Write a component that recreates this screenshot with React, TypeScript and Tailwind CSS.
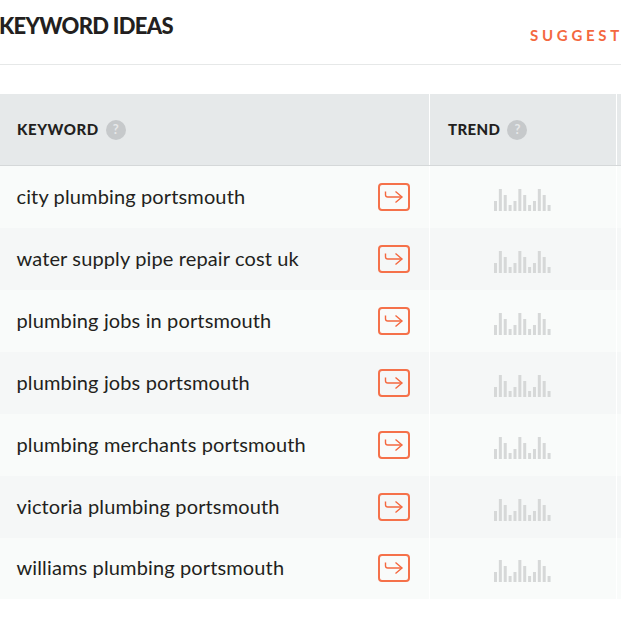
import React from "react";

const keywords = [
  "city plumbing portsmouth",
  "water supply pipe repair cost uk",
  "plumbing jobs in portsmouth",
  "plumbing jobs portsmouth",
  "plumbing merchants portsmouth",
  "victoria plumbing portsmouth",
  "williams plumbing portsmouth",
];

const bars = [10, 22, 16, 6, 10, 22, 16, 6, 10, 22, 16, 6];

const HelpBadge = () => (
  <span className="flex h-5 w-5 items-center justify-center rounded-full bg-[#c6c9cb] text-[13px] font-bold tracking-normal text-[#e6e8e9]">
    ?
  </span>
);

const ArrowButton = () => (
  <button className="flex h-7 w-8 items-center justify-center rounded-[4px] border-2 border-[#f5714a]">
    <svg width="20" height="14" viewBox="0 0 20 14" fill="none" stroke="#f4683f" strokeWidth="1.4">
      <path d="M1.500 1.500v3.200q0 2.300 2.300 2.300H18" />
      <path d="M11.500 1.500L18 7l-6.500 5.500" />
    </svg>
  </button>
);

const Trend = () => (
  <svg width="58" height="22" viewBox="0 0 58 22" fill="#d6d8d8">
    {bars.map((h, i) => (
      <rect key={i} x={i * 4.87} y={22 - h} width="3" height={h} />
    ))}
  </svg>
);

export default function App() {
  return (
    <div className="h-[617px] w-[621px] overflow-hidden bg-white font-['Lato',sans-serif] text-[#231f20]">
      <div className="flex h-[65px] w-[621px] items-start justify-between border-b border-[#e6e8e8]">
        <h2 className="-ml-px mt-[11px] text-[22px] leading-[30px] font-black tracking-[-0.7px] whitespace-nowrap">KEYWORD IDEAS</h2>
        <span className="mt-[25px] -mr-[2px] text-[15px] leading-5 font-bold tracking-[3.7px] whitespace-nowrap text-[#f4683f]">
          SUGGEST
        </span>
      </div>

      <div className="mt-[29px] w-[640px]">
        <div className="flex h-[72px] border-b border-[#d5d8d9] bg-[#e6e9ea]">
          <div className="flex w-[430px] items-center gap-[7px] border-r border-white pl-[17px] text-[15px] font-black tracking-[0.55px]">
            KEYWORD
            <HelpBadge />
          </div>
          <div className="flex w-[187px] items-center gap-[7px] border-r border-white pl-[18px] text-[15px] font-black tracking-[0.4px]">
            TREND
            <HelpBadge />
          </div>
        </div>
        {keywords.map((kw, i) => (
          <div key={kw} className={`flex h-[61.93px] ${i % 2 === 0 ? "bg-[#f9fbfa]" : "bg-[#f5f7f7]"}`}>
            <div className="flex w-[430px] items-center justify-between border-r border-white pr-[19px] pl-[16.500px] text-[20px] tracking-[0.13px]">
              <span className="mb-[2px] whitespace-nowrap">{kw}</span>
              <ArrowButton />
            </div>
            <div className="flex w-[187px] items-center justify-center border-r border-white pt-[6px]">
              <Trend />
            </div>
          </div>
        ))}
      </div>
    </div>
  );
}
